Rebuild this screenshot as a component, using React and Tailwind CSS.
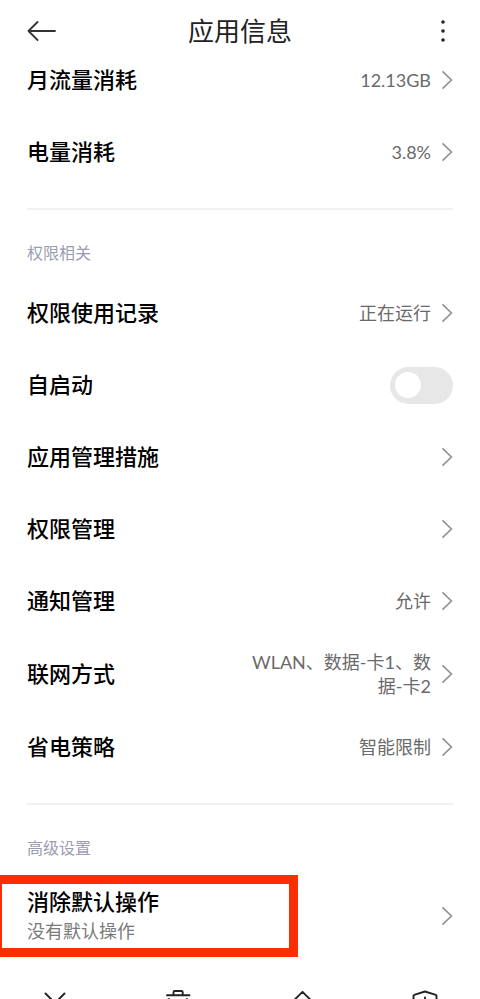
import { useState } from "react";

const usageItems = [
  { label: "月流量消耗", value: "12.13GB" },
  { label: "电量消耗", value: "3.8%" },
];

const permissionItems = [
  { label: "权限使用记录", value: "正在运行" },
  { label: "自启动", toggle: true },
  { label: "应用管理措施" },
  { label: "权限管理" },
  { label: "通知管理", value: "允许" },
  { label: "联网方式", value: "WLAN、数据-卡1、数据-卡2" },
  { label: "省电策略", value: "智能限制" },
];

function Chevron() {
  return (
    <svg
      className="h-5 w-3 shrink-0"
      viewBox="0 0 12 20"
      fill="none"
      stroke="#949494"
      strokeWidth="1.7"
      aria-hidden="true"
    >
      <path d="M1.5 1.3 10.4 10 1.5 18.7" />
    </svg>
  );
}

function SettingRow({ label, value }) {
  return (
    <button
      type="button"
      className="flex min-h-[72px] w-full items-center px-[27px] py-[13px] text-left"
    >
      <span className="flex-1 text-[22px] leading-[30px] font-medium text-black">{label}</span>
      {value && (
        <span className="max-w-[180px] text-right text-[18px] leading-[24px] font-normal text-[#6a6a6a]">
          {value}
        </span>
      )}
      <span className="ml-[10px]">
        <Chevron />
      </span>
    </button>
  );
}

function ToggleRow({ label }) {
  const [enabled, setEnabled] = useState(false);

  return (
    <label className="flex min-h-[72px] items-center justify-between px-[27px]">
      <span className="text-[22px] leading-[30px] font-medium text-black">{label}</span>
      <input
        type="checkbox"
        role="switch"
        checked={enabled}
        onChange={(e) => setEnabled(e.target.checked)}
        className="flex h-[37px] w-[63px] appearance-none items-center rounded-full bg-[#e7e7e7] px-[5px] before:size-[26px] before:rounded-full before:bg-white checked:justify-end checked:bg-blue-500"
      />
    </label>
  );
}

function Section({ title, children }) {
  return (
    <section>
      <hr className="mx-[27px] mt-5 border-t-2 border-[#f1f1f1]" />
      <h2 className="px-[27px] pt-[31px] pb-3 text-[16px] leading-[24px] font-normal text-[#9a9db2]">
        {title}
      </h2>
      {children}
    </section>
  );
}

function NavButton({ label, children }) {
  return (
    <button type="button" aria-label={label}>
      <svg
        className="size-7"
        viewBox="0 0 28 28"
        fill="none"
        stroke="#222"
        strokeWidth="1.9"
        strokeLinecap="round"
        strokeLinejoin="round"
      >
        {children}
      </svg>
    </button>
  );
}

export default function App() {
  return (
    <div className="h-screen overflow-hidden bg-white font-['Lato','Noto_Sans_CJK_SC',sans-serif]">
      <header className="flex items-center justify-between px-[27px] pt-[18px]">
        <button type="button" aria-label="返回">
          <svg
            className="h-5 w-[30px]"
            viewBox="0 0 30 20"
            fill="none"
            stroke="#333"
            strokeWidth="1.8"
            strokeLinecap="round"
            strokeLinejoin="round"
          >
            <path d="M28 10H1.5M10.5 1 1.5 10l9 9" />
          </svg>
        </button>
        <h1 className="text-[26px] leading-[26px] font-normal text-[#222]">应用信息</h1>
        <button type="button" aria-label="更多" className="flex w-[30px] justify-center pl-[10px]">
          <svg className="h-6 w-2" viewBox="0 0 8 24" fill="#222">
            <circle cx="4" cy="3" r="1.8" />
            <circle cx="4" cy="12" r="1.8" />
            <circle cx="4" cy="21" r="1.8" />
          </svg>
        </button>
      </header>

      <main>
        {usageItems.map((item) => (
          <SettingRow key={item.label} {...item} />
        ))}

        <Section title="权限相关">
          {permissionItems.map((item) =>
            item.toggle ? (
              <ToggleRow key={item.label} label={item.label} />
            ) : (
              <SettingRow key={item.label} label={item.label} value={item.value} />
            )
          )}
        </Section>

        <Section title="高级设置">
          <div className="relative">
            <button
              type="button"
              className="flex w-full items-center px-[27px] py-[15px] text-left"
            >
              <span className="flex-1">
                <span className="block text-[22px] leading-[30px] font-medium text-black">
                  消除默认操作
                </span>
                <span className="block text-[18px] leading-[28px] font-normal text-[#7a7a7a]">
                  没有默认操作
                </span>
              </span>
              <Chevron />
            </button>
            {/* highlight frame */}
            <div className="pointer-events-none absolute inset-y-[3px] left-0 w-[298px] border-[9px] border-l-2 border-[#fd2d03]" />
          </div>
        </Section>
      </main>

      <nav className="flex justify-between px-[41px] pt-7">
        <NavButton label="结束运行">
          <path d="M4.5 5.5l19 19M23.5 5.5l-19 19" />
        </NavButton>
        <NavButton label="卸载">
          <path d="M3 7.3h22.500M9.500 7V4.200Q9.500 3 10.700 3h6.800q1.200 0 1.200 1.200V7M5 11l1 13.500q.2 2 2 2h12q1.800 0 2-2L23 11" />
        </NavButton>
        <NavButton label="清除数据">
          <path d="M14.500 3.800 25 14.300 14.500 24.800 4 14.300z" />
        </NavButton>
        <NavButton label="安全">
          <path d="M14 3.500 3.200 6.800Q2.500 7 2.500 8v7q0 7 11.500 11.500Q25.500 22 25.500 15V8q0-1-.7-1.200zM14 9.500v7" />
        </NavButton>
      </nav>
    </div>
  );
}
